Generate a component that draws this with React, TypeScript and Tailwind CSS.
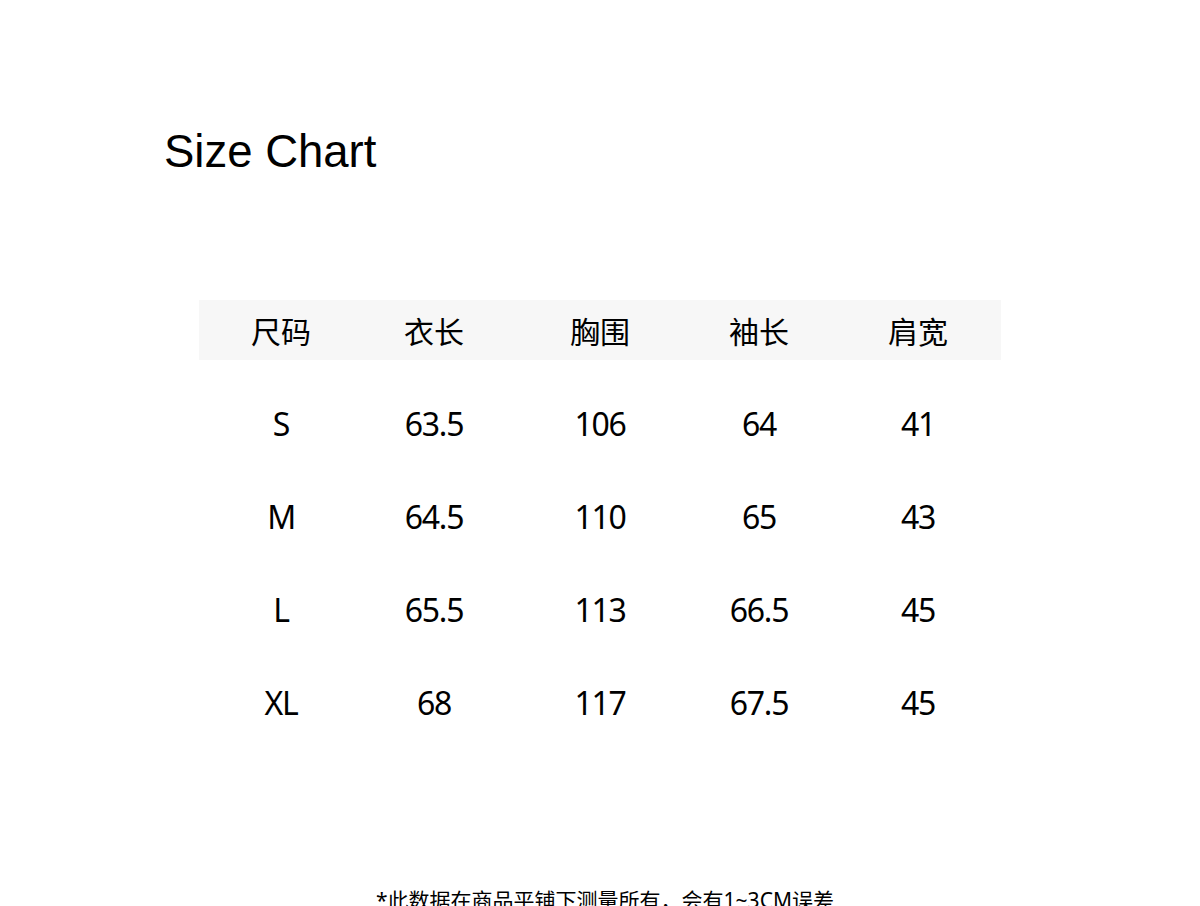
const rows = [
  ["S", "63.5", "106", "64", "41"],
  ["M", "64.5", "110", "65", "43"],
  ["L", "65.5", "113", "66.5", "45"],
  ["XL", "68", "117", "67.5", "45"],
];

const headers = ["尺码", "衣长", "胸围", "袖长", "肩宽"];

const cols = "grid grid-cols-[164px_142px_190px_128px_178px]";

const App = () => {
  return (
    <div className="w-[1200px] h-[906px] bg-white overflow-hidden text-black">
      <div className="pt-[129px] pl-[164px]">
        <h1 className="text-[45.5px] leading-none font-normal font-['Liberation_Sans',Arial,sans-serif]">
          Size Chart
        </h1>
      </div>

      <div className="ml-[199px] w-[802px] mt-[125px]">
        <div className={`${cols} h-[60px] bg-[#f7f7f7] items-center text-[30px] leading-none font-['Noto_Sans_CJK_SC',sans-serif]`}>
          {headers.map((h, i) => (
            <div key={h} className={`text-center ${i === 4 ? "pl-[12px]" : ""}`}>{h}</div>
          ))}
        </div>
        <div className="mt-[18px]">
          {rows.map(r => (
            <div key={r[0]} className={`${cols} h-[93px] items-center text-[32px] leading-none tracking-[-0.04em] font-['Noto_Sans',sans-serif]`}>
              {r.map((v, i) => (
                <div key={i} className={`text-center ${i === 4 ? "pl-[12px]" : ""}`}>{v}</div>
              ))}
            </div>
          ))}
        </div>
      </div>

      <div className="mt-[140px] pl-[10px] text-center text-[21px] leading-none font-['Noto_Sans','Noto_Sans_CJK_SC',sans-serif]">
        *此数据在商品平铺下测量所有，会有1~3CM误差
      </div>
    </div>
  );
};

export default App;
